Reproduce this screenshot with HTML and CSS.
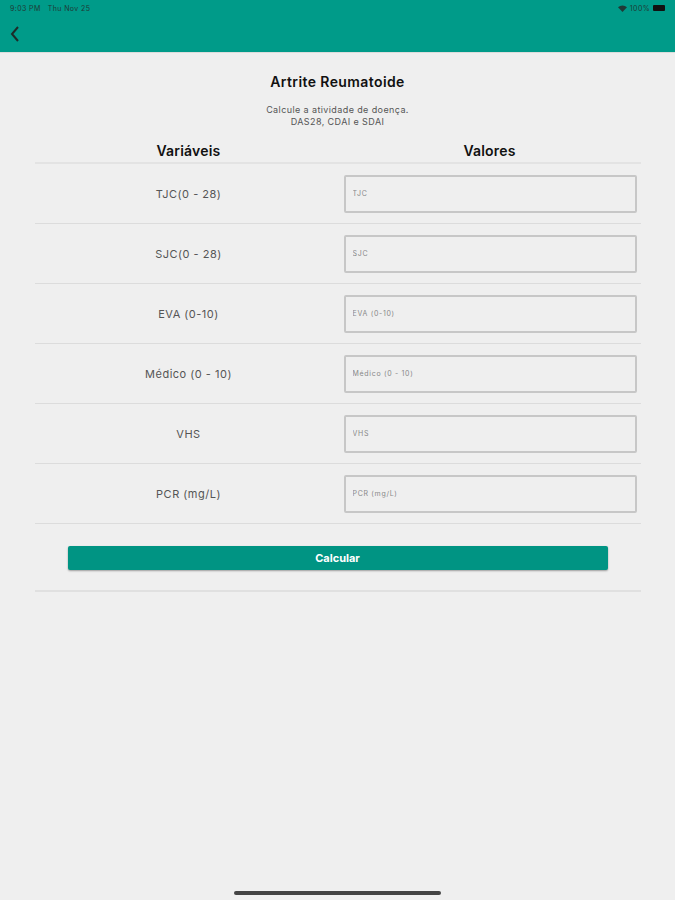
FILE: index.html
```html
<!DOCTYPE html>
<html lang="pt">
<head>
    <meta charset="UTF-8">
    <meta name="viewport" content="width=device-width, initial-scale=1.0">
    <title>Artrite Reumatoide</title>
    <link rel="stylesheet" href="styles.css">
</head>
<body>

    <header class="topbar">
        <div class="status">
            <span class="clock">9:03 PM&nbsp;&nbsp;&nbsp;Thu Nov 25</span>
            <span class="status-right">
                <svg width="9" height="7" viewBox="0 0 9 7"><path d="M4.5 7 L0 2.2 A6.5 6.5 0 0 1 9 2.2 Z" fill="#1f3a36"/></svg>
                <span>100%</span>
                <span class="battery"></span>
            </span>
        </div>
        <div class="navrow">
            <svg class="back" width="12" height="18" viewBox="0 0 12 18"><path d="M9 2 L3 9 L9 16" fill="none" stroke="#1d2b29" stroke-width="2"/></svg>
        </div>
    </header>

    <main class="content">
        <h1>Artrite Reumatoide</h1>
        <p class="subtitle">Calcule a atividade de doença.<br>DAS28, CDAI e SDAI</p>

        <div class="table">
            <div class="row head">
                <div class="cell">Variáveis</div>
                <div class="cell">Valores</div>
            </div>
            <div class="row">
                <div class="cell label">TJC(0 - 28)</div>
                <div class="cell"><input type="text" placeholder="TJC"></div>
            </div>
            <div class="row">
                <div class="cell label">SJC(0 - 28)</div>
                <div class="cell"><input type="text" placeholder="SJC"></div>
            </div>
            <div class="row">
                <div class="cell label">EVA (0-10)</div>
                <div class="cell"><input type="text" placeholder="EVA (0-10)"></div>
            </div>
            <div class="row">
                <div class="cell label">Médico (0 - 10)</div>
                <div class="cell"><input type="text" placeholder="Médico (0 - 10)"></div>
            </div>
            <div class="row">
                <div class="cell label">VHS</div>
                <div class="cell"><input type="text" placeholder="VHS"></div>
            </div>
            <div class="row">
                <div class="cell label">PCR (mg/L)</div>
                <div class="cell"><input type="text" placeholder="PCR (mg/L)"></div>
            </div>
            <div class="actions">
                <button>Calcular</button>
            </div>
        </div>
    </main>

    <div class="home-indicator"></div>

</body>
</html>
```

FILE: styles.css
```css
body {
    margin: 0;
    height: 900px;
    overflow: hidden;
    background-color: #efefef;
    font-family: Inter, "Liberation Sans", sans-serif;
    color: #333333;
    position: relative;
}
.topbar {
    background-color: #009b89;
    height: 52px;
    border-bottom: 1px solid #dcdcdc;
}
.status {
    display: flex;
    justify-content: space-between;
    align-items: center;
    height: 16px;
    padding: 0 10px 0 10px;
    font-size: 7px;
    letter-spacing: 0.4px;
    color: #1f3a36;
}
.status-right {
    display: flex;
    align-items: center;
    gap: 3px;
}
.battery {
    display: inline-block;
    width: 12px;
    height: 6px;
    background-color: #111111;
    border-radius: 1px;
}
.navrow {
    display: flex;
    align-items: center;
    height: 36px;
    padding-left: 9px;
}
.content {
    display: flex;
    flex-direction: column;
    align-items: center;
}
h1 {
    font-size: 14px;
    font-weight: 600;
    color: #111111;
    margin: 20px 0 0 0;
    letter-spacing: 0.4px;
}
.subtitle {
    font-size: 9px;
    line-height: 12px;
    letter-spacing: 0.4px;
    color: #555555;
    text-align: center;
    margin: 14px 0 0 0;
}
.table {
    width: 606px;
    margin-top: 10px;
}
.row {
    display: grid;
    grid-template-columns: 308px 298px;
    height: 59px;
    border-bottom: 1px solid #dcdcdc;
    align-items: center;
}
.row.head {
    height: 24px;
    border-bottom: 2px solid #e3e3e3;
    font-size: 14px;
    font-weight: 600;
    letter-spacing: 0.2px;
    color: #111111;
}
.row.head .cell {
    text-align: center;
}
.row.head .cell:last-child {
    padding-right: 4px;
}
.cell.label {
    text-align: center;
    font-size: 11px;
    letter-spacing: 0.5px;
    color: #555555;
}
.cell input {
    box-sizing: border-box;
    width: 293px;
    height: 38px;
    margin-left: 1px;
    border: 2px solid #c7c7c7;
    border-radius: 2px;
    background-color: #efefef;
    padding: 0 7px;
    font-family: Inter, "Liberation Sans", sans-serif;
    font-size: 7px;
    letter-spacing: 0.7px;
}
.cell input::placeholder {
    color: #888888;
}
.actions {
    padding: 22px 0 20px 33px;
    border-bottom: 2px solid #e0e0e0;
}
.actions button {
    width: 540px;
    height: 24px;
    border: none;
    border-radius: 2px;
    background-color: #009483;
    color: #ffffff;
    font-family: Inter, "Liberation Sans", sans-serif;
    font-size: 11px;
    font-weight: bold;
    box-shadow: 0 1px 2px rgba(0, 0, 0, 0.35);
}
.home-indicator {
    position: absolute;
    left: 234px;
    top: 891px;
    width: 207px;
    height: 4px;
    border-radius: 2px;
    background-color: #444444;
}
```
